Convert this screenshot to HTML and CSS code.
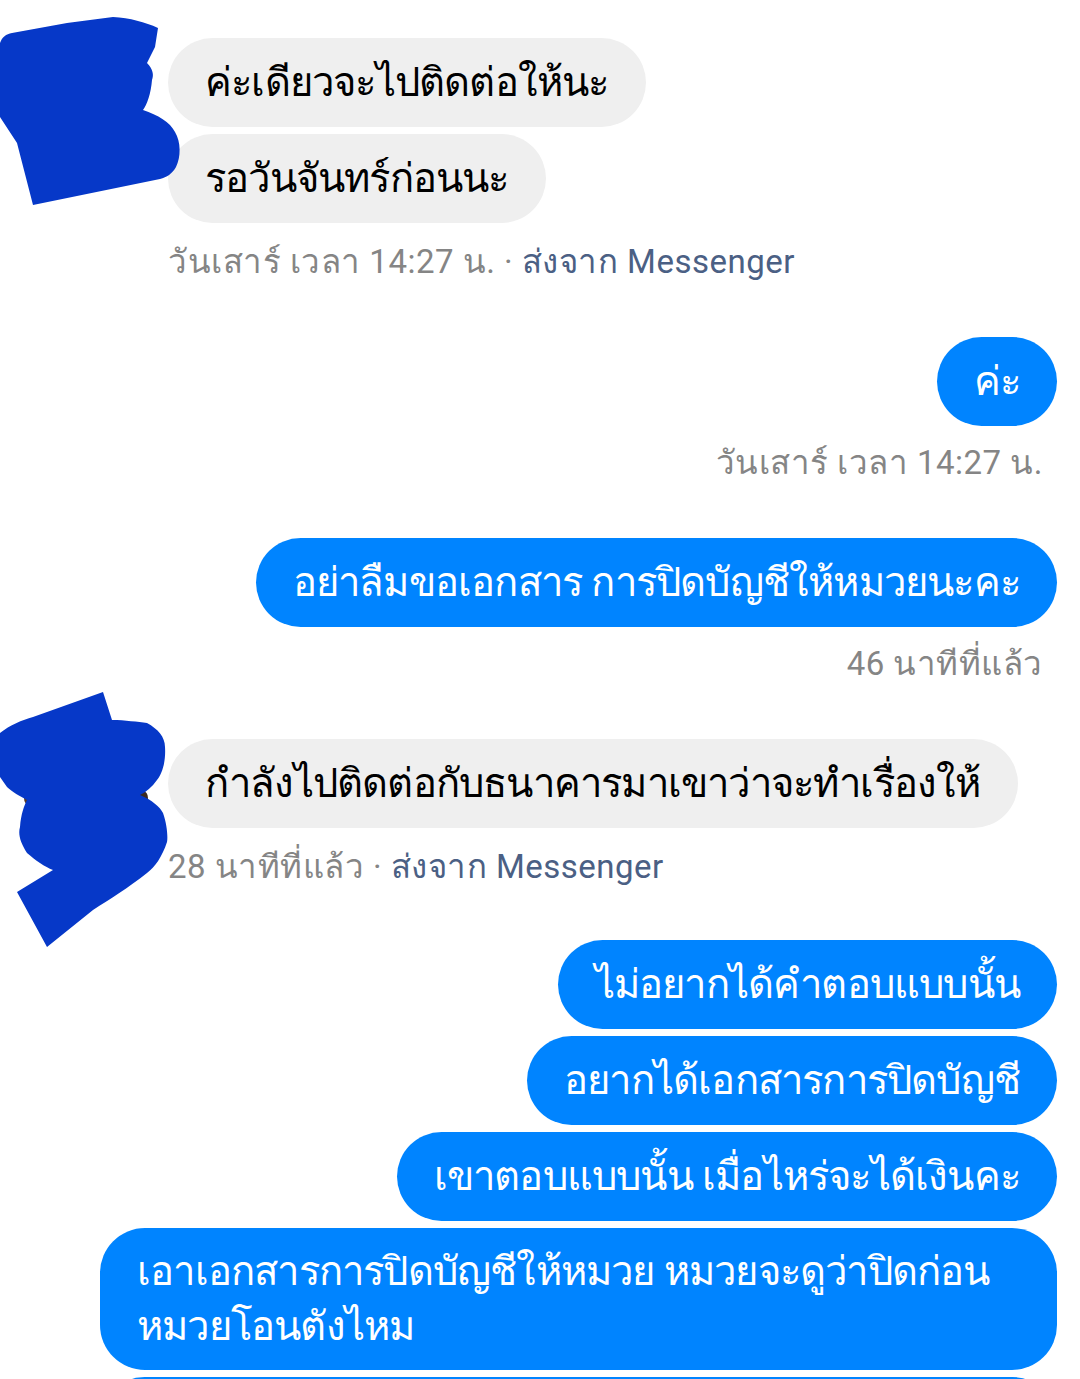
FILE: index.html
```html
<!DOCTYPE html>
<html lang="th">
<head>
<meta charset="utf-8">
<title>Messenger</title>
<link rel="stylesheet" href="styles.css">
</head>
<body>
<div class="chat">
  <div class="group in first">
    <div class="avatar">
      <svg class="blob blob1" viewBox="0 0 181 190" width="181" height="190">
        <path d="M0 26 C2 20 6 17 12 16 L67 6 L113 0 C130 1 145 5 158 11 L155 30 L147 46 C153 52 154 58 152 63 C151 76 147 88 143 93 C158 98 170 105 175 115 C181 125 181 140 176 150 C172 157 167 160 160 162 L33 188 L17 126 L0 100 Z" fill="#0638c8"/>
      </svg>
    </div>
    <div class="stack">
      <div class="bubble grey">ค่ะเดียวจะไปติดต่อให้นะ</div>
      <div class="bubble grey">รอวันจันทร์ก่อนนะ</div>
      <div class="meta">วันเสาร์ เวลา 14:27 น. · <span class="via">ส่งจาก Messenger</span></div>
    </div>
  </div>

  <div class="group out">
    <div class="bubble blue">ค่ะ</div>
    <div class="meta">วันเสาร์ เวลา 14:27 น.</div>
  </div>

  <div class="group out">
    <div class="bubble blue">อย่าลืมขอเอกสาร การปิดบัญชีให้หมวยนะคะ</div>
    <div class="meta">46 นาทีที่แล้ว</div>
  </div>

  <div class="group in">
    <div class="avatar">
      <svg class="blob blob2" viewBox="0 0 168 256" width="168" height="256">
        <ellipse cx="29" cy="106" rx="5" ry="7" fill="#5a3a22"/>
        <ellipse cx="143" cy="106" rx="5" ry="7" fill="#3d2a1e"/>
        <path d="M0 41 C10 33 22 28 33 25 L103 0 L112 28 C125 28 138 30 147 31 C158 37 165 45 165 55 C166 70 162 82 157 88 C152 95 146 100 140 103 C152 108 160 115 163 121 C167 132 168 145 167 150 C162 165 155 175 147 181 C128 196 110 207 93 218 L47 255 L17 200 L53 178 C45 175 35 168 27 161 C20 150 18 142 20 135 C21 122 24 114 27 108 C20 104 12 100 7 95 L0 85 Z" fill="#0638c8"/>
      </svg>
    </div>
    <div class="stack">
      <div class="bubble grey">กำลังไปติดต่อกับธนาคารมาเขาว่าจะทำเรื่องให้</div>
      <div class="meta">28 นาทีที่แล้ว · <span class="via">ส่งจาก Messenger</span></div>
    </div>
  </div>

  <div class="group out last">
    <div class="bubble blue">ไม่อยากได้คำตอบแบบนั้น</div>
    <div class="bubble blue">อยากได้เอกสารการปิดบัญชี</div>
    <div class="bubble blue">เขาตอบแบบนั้น เมื่อไหร่จะได้เงินคะ</div>
    <div class="bubble blue wide">เอาเอกสารการปิดบัญชีให้หมวย หมวยจะดูว่าปิดก่อน หมวยโอนตังไหม</div>
    <div class="bubble blue next">&nbsp;</div>
  </div>
</div>
</body>
</html>
```

FILE: styles.css
```css
html, body {
  margin: 0;
  padding: 0;
  background: #ffffff;
}
body {
  font-family: Roboto, "Noto Sans", "DejaVu Sans", sans-serif;
  color: #000;
  overflow: hidden;
}
.chat {
  display: flex;
  flex-direction: column;
  padding: 38px 23px 0 0;
  gap: 55px;
}
.group.in {
  display: flex;
  flex-direction: row;
  align-items: flex-start;
}
.group.out {
  display: flex;
  flex-direction: column;
  align-items: flex-end;
  gap: 8px;
}
.group.last {
  gap: 7px;
  margin-top: -2px;
}
.avatar {
  position: relative;
  width: 168px;
  flex: 0 0 168px;
  align-self: stretch;
}
.blob {
  position: absolute;
  left: 0;
  z-index: 2;
  overflow: visible;
}
.blob1 { top: -21px; }
.blob2 { top: -47px; }
.stack {
  display: flex;
  flex-direction: column;
  align-items: flex-start;
  gap: 7px;
}
.bubble {
  font-size: 40px;
  letter-spacing: -0.8px;
  line-height: 55px;
  padding: 17px 37px;
  border-radius: 45px;
  box-sizing: border-box;
  max-width: 957px;
}
.bubble.grey {
  background: #efefef;
  color: #000;
}
.bubble.blue {
  background: #0084ff;
  color: #ffffff;
}
.meta {
  font-size: 33px;
  letter-spacing: 0.5px;
  line-height: 40px;
  color: #858585;
  margin-top: 12px;
}
.group.out .meta {
  margin-top: 9px;
  margin-right: 14px;
}
.via {
  color: #4b6084;
}
.bubble.wide {
  width: 957px;
  padding: 16px 50px 16px 37px;
}
.bubble.next {
  width: 957px;
}
```
